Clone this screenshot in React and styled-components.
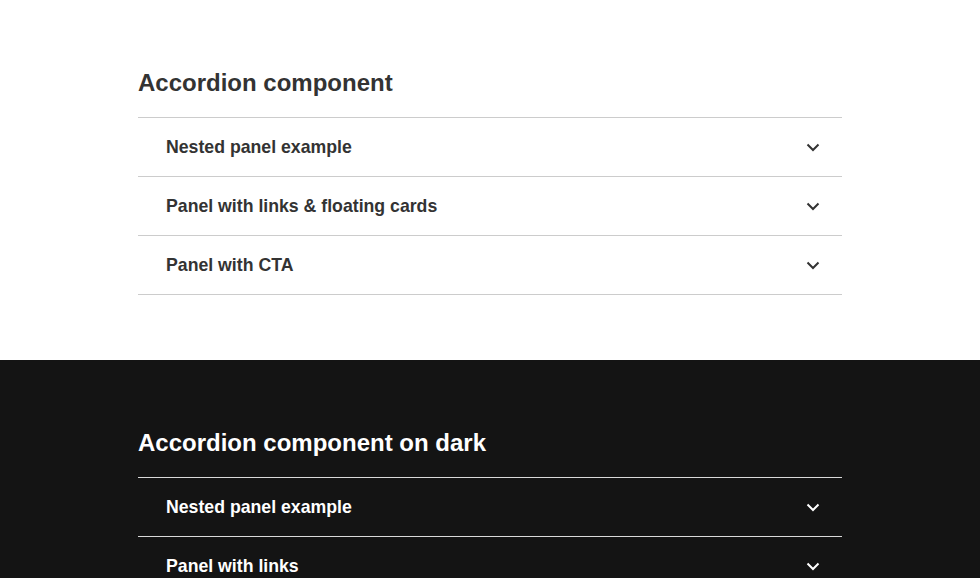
import React from "react";
import styled, { createGlobalStyle } from "styled-components";

const Global = createGlobalStyle`
    body {
        margin: 0;
        font-family: "Liberation Sans", Arial, Helvetica, sans-serif;
        background: #fff;
    }
`;

const themes = {
    light: { bg: "#ffffff", text: "#333333", line: "#cccccc" },
    dark: { bg: "#141414", text: "#ffffff", line: "#d9d9d9" },
};

const Section = styled.section`
    background: ${({ tone }) => themes[tone].bg};
    color: ${({ tone }) => themes[tone].text};
    padding: 68px 0 65px;
`;

const Inner = styled.div`
    max-width: 704px;
    margin: 0 auto;
`;

const Heading = styled.h2`
    margin: 0 0 20px;
    font-size: 24px;
    line-height: 29px;
    font-weight: 700;
`;

const List = styled.div`
    border-top: 1px solid ${({ tone }) => themes[tone].line};
`;

const Row = styled.button`
    display: flex;
    align-items: center;
    justify-content: space-between;
    width: 100%;
    height: 59px;
    padding: 0 22px 0 28px;
    border: none;
    border-bottom: 1px solid ${({ tone }) => themes[tone].line};
    background: transparent;
    color: inherit;
    font-family: inherit;
    font-size: 17.7px;
    font-weight: 700;
    text-align: left;
    cursor: pointer;
`;

const Chevron = () => (
    <svg width="14" height="9" viewBox="0 0 14 9" fill="none">
        <path d="M1.5 1.5 L7 7 L12.5 1.5" stroke="currentColor" strokeWidth="2" />
    </svg>
);

const Accordion = ({ tone, title, items }) => (
    <Section tone={tone}>
        <Inner>
            <Heading>{title}</Heading>
            <List tone={tone}>
                {items.map((label) => (
                    <Row tone={tone} key={label}>
                        <span>{label}</span>
                        <Chevron />
                    </Row>
                ))}
            </List>
        </Inner>
    </Section>
);

export default function App() {
    return (
        <>
            <Global />
            <Accordion
                tone="light"
                title="Accordion component"
                items={["Nested panel example", "Panel with links & floating cards", "Panel with CTA"]}
            />
            <Accordion
                tone="dark"
                title="Accordion component on dark"
                items={["Nested panel example", "Panel with links", "Panel with CTA"]}
            />
        </>
    );
}
